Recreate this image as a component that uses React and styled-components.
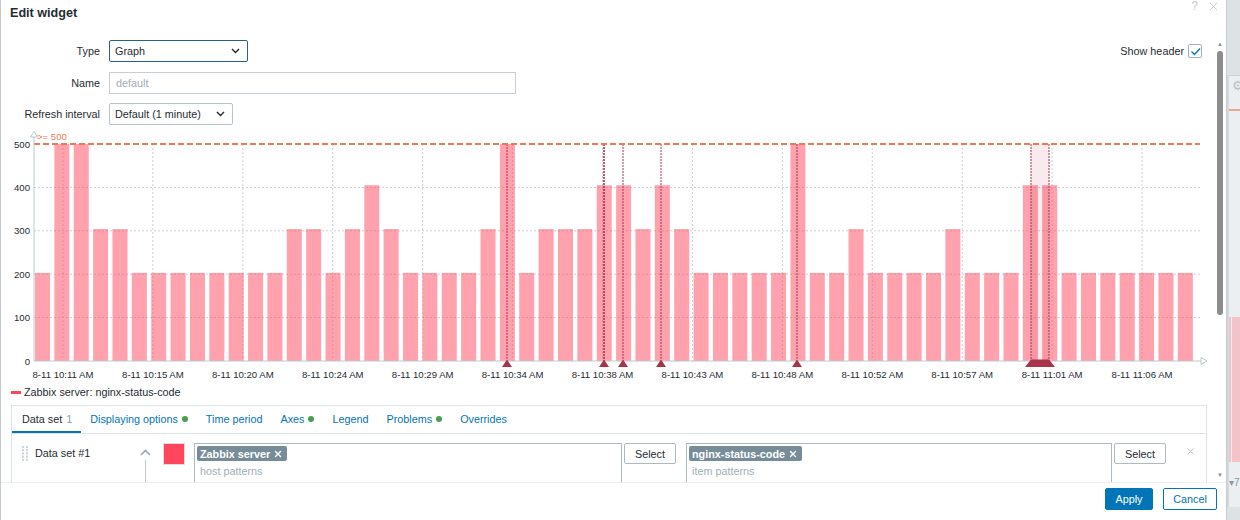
import React from 'react';
import styled, { createGlobalStyle } from 'styled-components';
import { X } from 'lucide-react';

const GlobalStyle = createGlobalStyle`
  html, body {
    margin: 0;
    padding: 0;
    background: #dfe3e6;
  }
  body {
    font-family: "Liberation Sans", Arial, sans-serif;
    font-size: 10.8px;
    color: #1f2c33;
  }
  * {
    box-sizing: border-box;
  }
`;

const expand = (list) => list.flatMap((v) => (Array.isArray(v) ? Array(v[1]).fill(v[0]) : [v]));

const rawValues = expand([
  200, 500, 500, 300, 300, [200, 8], 300, 300, 200, 300, 400, 300, [200, 4],
  300, 500, 200, 300, 300, 300, 400, 400, 300, 400, 300, [200, 5],
  500, 200, 200, 300, [200, 4], 300, [200, 3], 400, 400, [200, 7],
]);
const values = rawValues.map((v) => (v === 200 ? 203 : v === 300 ? 304 : v === 400 ? 405 : 520));

const timeLabels = ['10:11', '10:15', '10:20', '10:24', '10:29', '10:34', '10:38', '10:43', '10:48', '10:52', '10:57', '11:01', '11:06'];
const problemLines = [507, 604, 623, 661, 797];

const yOf = (v) => 361 - Math.min(v, 500) * 0.434;

const Graph = () => (
  <ChartSvg width="1197" height="250" viewBox="11 131 1197 250">
    {[100, 200, 300, 400].map((v) => (
      <line key={v} x1="34" x2="1200" y1={yOf(v)} y2={yOf(v)} stroke="#c9d0d4" strokeDasharray="2,2" />
    ))}
    {timeLabels.map((t, i) => (
      <line key={t} x1={63 + i * 89.92} x2={63 + i * 89.92} y1="144" y2="361" stroke="#c9d0d4" strokeDasharray="2,2" />
    ))}
    {values.map((v, i) => (
      <rect key={i} x={35 + i * 19.37} y={yOf(v)} width="15" height={361 - yOf(v)} fill="#ff465c" fillOpacity="0.5" />
    ))}

    <rect x="1031" y="144" width="18" height="217" fill="#b8344e" fillOpacity="0.1" />
    {[...problemLines, 1031, 1049].map((x) => (
      <line key={x} x1={x} x2={x} y1="144" y2="361" stroke="#a8344a" strokeWidth={x === 604 ? 1.6 : 1} strokeDasharray="2,1" />
    ))}

    <line x1="34" x2="1200" y1="144" y2="144" stroke="#ef7a5b" strokeWidth="2" strokeDasharray="6,3" />
    <text x="37" y="140" fontSize="9.6" fill="#ef7a5b">&gt;= 500</text>

    <line x1="34" x2="34" y1="136" y2="361" stroke="#bfc8cd" />
    <line x1="34" x2="1201" y1="361" y2="361" stroke="#bfc8cd" />
    <polygon points="34,131.5 30.5,137 37.5,137" fill="#fff" stroke="#bfc8cd" />
    <polygon points="1207,361 1201,357.5 1201,364.5" fill="#fff" stroke="#bfc8cd" />

    {problemLines.map((x) => (
      <polygon key={x} points={`${x - 5},367 ${x},359.5 ${x + 5},367`} fill="#a8344a" />
    ))}
    <polygon points="1025,367 1031,359.5 1049,359.5 1055,367" fill="#a8344a" />

    {[0, 100, 200, 300, 400, 500].map((v) => (
      <text key={v} x="30" y={yOf(v) + 3.5} fontSize="9.6" textAnchor="end" fill="#1f2c33">{v}</text>
    ))}
    {timeLabels.map((t, i) => (
      <text key={t} x={63 + i * 89.92} y="377.5" fontSize="9.6" textAnchor="middle" fill="#1f2c33">8-11 {t} AM</text>
    ))}
  </ChartSvg>
);

const SelectArrow = () => (
  <svg width="9" height="6" viewBox="0 0 9 6">
    <path d="M1 1l3.5 3.5L8 1" fill="none" stroke="#1f2c33" strokeWidth="1.4" />
  </svg>
);

const Grip = () => (
  <svg width="6" height="16" viewBox="0 0 6 16">
    {[0, 1, 2, 3, 4].map((r) => (
      <g key={r}>
        <rect x="0" y={r * 3.2} width="2" height="2" fill="#ccd3d8" />
        <rect x="4" y={r * 3.2} width="2" height="2" fill="#ccd3d8" />
      </g>
    ))}
  </svg>
);

const Tag = ({ children }) => (
  <TagBox>
    {children}
    <X size={10} strokeWidth={3.4} />
  </TagBox>
);

const GhostChart = () => (
  <svg width="14" height="180" viewBox="0 0 14 180">
    <rect x="3" y="0" width="11" height="145" fill="#f2c3c9" />
    <rect x="0" y="0" width="2" height="145" fill="#f2c3c9" />
    <line x1="0" x2="14" y1="4" y2="4" stroke="#cdd3d7" strokeDasharray="2,2" />
  </svg>
);

export default function App() {
  return (
    <>
      <GlobalStyle />
      <Screen>
        <Dialog>
          <Header>
            <Title>Edit widget</Title>
            <HeaderTools>
              <HelpMark>?</HelpMark>
              <X size={13} color="#c5ccd1" strokeWidth={1.6} />
            </HeaderTools>
          </Header>

          <Body>
            <Content>
              <FormTop>
                <FormGrid>
                  <Label>Type</Label>
                  <SelectBox $width={139} $focused>
                    Graph
                    <SelectArrow />
                  </SelectBox>
                  <Label>Name</Label>
                  <TextInput>default</TextInput>
                  <Label>Refresh interval</Label>
                  <SelectBox $width={124}>
                    Default (1 minute)
                    <SelectArrow />
                  </SelectBox>
                </FormGrid>
                <ShowHeader>
                  Show header
                  <CheckBox>
                    <svg width="11" height="9" viewBox="0 0 11 9">
                      <path d="M1.5 4.5l3 3L10 1.5" fill="none" stroke="#0275b8" strokeWidth="1.3" />
                    </svg>
                  </CheckBox>
                </ShowHeader>
              </FormTop>

              <Graph />

              <Legend>
                <LegendSwatch />
                Zabbix server: nginx-status-code
              </Legend>

              <TabsBox>
                <TabBar>
                  <Tab $active>
                    Data set<TabCount>1</TabCount>
                  </Tab>
                  <Tab>Displaying options<Dot /></Tab>
                  <Tab>Time period</Tab>
                  <Tab>Axes<Dot /></Tab>
                  <Tab>Legend</Tab>
                  <Tab>Problems<Dot /></Tab>
                  <Tab>Overrides</Tab>
                </TabBar>

                <DataSetRow>
                  <GripCell>
                    <Grip />
                  </GripCell>
                  <DataSetName>Data set #1</DataSetName>
                  <CollapseCell>
                    <svg width="11" height="7" viewBox="0 0 11 7">
                      <path d="M1 6l4.5-4.5L10 6" fill="none" stroke="#9aa8b1" strokeWidth="1.6" />
                    </svg>
                    <CollapseLine />
                  </CollapseCell>
                  <ColorSwatch />
                  <MultiSelect $width={428}>
                    <Tag>Zabbix server</Tag>
                    <Placeholder>host patterns</Placeholder>
                  </MultiSelect>
                  <SelectButton>Select</SelectButton>
                  <MultiSelect $width={426} $gap={10}>
                    <Tag>nginx-status-code</Tag>
                    <Placeholder>item patterns</Placeholder>
                  </MultiSelect>
                  <SelectButton>Select</SelectButton>
                  <RemoveIcon>
                    <X size={11} color="#b3bec5" strokeWidth={1.8} />
                  </RemoveIcon>
                </DataSetRow>
              </TabsBox>
            </Content>

            <ScrollBar>
              <ScrollArrow>▲</ScrollArrow>
              <ScrollThumb />
              <ScrollSpacer />
              <ScrollArrow>▼</ScrollArrow>
            </ScrollBar>
          </Body>

          <Footer>
            <PrimaryButton>Apply</PrimaryButton>
            <OutlineButton>Cancel</OutlineButton>
          </Footer>
        </Dialog>

        <Backdrop>
          <GhostWidget>
            <GhostGear>⚙</GhostGear>
            <GhostThreshold />
            <GhostChartWrap>
              <GhostChart />
            </GhostChartWrap>
            <GhostLabel>▾7 AM</GhostLabel>
          </GhostWidget>
        </Backdrop>
      </Screen>
    </>
  );
}

const Screen = styled.div`
  display: flex;
  width: 1240px;
  height: 520px;
  overflow: hidden;
`;

const Dialog = styled.div`
  width: 1227px;
  height: 520px;
  flex-shrink: 0;
  display: flex;
  flex-direction: column;
  background: #fff;
  border-left: 1px solid #c3cbd0;
  border-right: 1px solid #c3cbd0;
`;

const Header = styled.div`
  height: 38px;
  flex-shrink: 0;
  display: flex;
  justify-content: space-between;
  align-items: flex-start;
  padding: 0 6px 0 9px;
`;

const Title = styled.h4`
  margin: 5px 0 0;
  font-size: 12.6px;
  line-height: 16px;
  font-weight: bold;
  color: #1f2c33;
`;

const HeaderTools = styled.div`
  display: flex;
  align-items: center;
  gap: 9px;
  margin-top: 0;
`;

const HelpMark = styled.span`
  font-size: 12px;
  line-height: 13px;
  color: #c5ccd1;
`;

const Body = styled.div`
  flex: 1;
  min-height: 0;
  display: flex;
  overflow: hidden;
`;

const Content = styled.div`
  flex: 1;
  min-width: 0;
  padding: 2px 8px 0 10px;
  overflow: hidden;
`;

const FormTop = styled.div`
  display: flex;
  justify-content: space-between;
  align-items: flex-start;
`;

const FormGrid = styled.div`
  display: grid;
  grid-template-columns: 89px auto;
  grid-auto-rows: 22px;
  column-gap: 9px;
  row-gap: 9.5px;
  align-items: center;
  justify-items: start;
`;

const Label = styled.label`
  justify-self: end;
  font-size: 10.8px;
  color: #1f2c33;
`;

const SelectBox = styled.div`
  width: ${(p) => p.$width}px;
  height: 22px;
  display: flex;
  align-items: center;
  justify-content: space-between;
  padding: 0 7px 0 5px;
  border: 1px solid ${(p) => (p.$focused ? '#2a5f88' : '#b7c3ca')};
  border-radius: 2px;
  font-size: 10.8px;
  color: #1f2c33;
`;

const TextInput = styled.div`
  width: 407px;
  height: 22px;
  display: flex;
  align-items: center;
  padding: 0 6px;
  border: 1px solid #c5cfd5;
  font-size: 10.8px;
  color: #a2adb3;
`;

const ShowHeader = styled.div`
  display: flex;
  align-items: center;
  gap: 4px;
  margin: 4px 5px 0 0;
  font-size: 10.8px;
  color: #1f2c33;
`;

const CheckBox = styled.span`
  width: 14px;
  height: 14px;
  display: flex;
  align-items: center;
  justify-content: center;
  border: 1px solid #9fb0ba;
  border-radius: 2px;
`;

const ChartSvg = styled.svg`
  display: block;
  margin-top: 6px;
  font-family: "Liberation Sans", Arial, sans-serif;
`;

const Legend = styled.div`
  display: flex;
  align-items: center;
  gap: 3px;
  height: 14px;
  margin-top: 4px;
  font-size: 10.8px;
  color: #1f2c33;
`;

const LegendSwatch = styled.span`
  width: 10px;
  height: 3px;
  background: #ff465c;
`;

const TabsBox = styled.div`
  margin-top: 6px;
  height: 120px;
  border: 1px solid #dfe4e7;
  border-bottom: none;
`;

const TabBar = styled.div`
  display: flex;
  height: 28px;
  border-bottom: 1px solid #dfe4e7;
`;

const Tab = styled.div`
  display: flex;
  align-items: center;
  gap: 4px;
  padding: 0 9px 0 ${(p) => (p.$active ? 10 : 9)}px;
  font-size: 10.8px;
  color: ${(p) => (p.$active ? '#1f2c33' : '#0275b8')};
  border-bottom: 2px solid ${(p) => (p.$active ? '#0275b8' : 'transparent')};
`;

const TabCount = styled.span`
  color: #7f9fb6;
`;

const Dot = styled.span`
  width: 6px;
  height: 6px;
  border-radius: 50%;
  background: #46a04c;
`;

const DataSetRow = styled.div`
  display: flex;
  align-items: flex-start;
  padding: 9px 0 0 10px;
`;

const GripCell = styled.div`
  width: 13px;
  padding-top: 3px;
`;

const DataSetName = styled.div`
  width: 105px;
  line-height: 20px;
  font-size: 10.8px;
  color: #1f2c33;
`;

const CollapseCell = styled.div`
  width: 23px;
  display: flex;
  flex-direction: column;
  align-items: flex-start;
  padding-top: 6px;
  gap: 4px;
`;

const CollapseLine = styled.span`
  width: 1px;
  height: 40px;
  margin-left: 5px;
  background: #c3cbd0;
`;

const ColorSwatch = styled.span`
  width: 22px;
  height: 22px;
  margin-right: 9px;
  background: #ff465c;
  border: 1px solid #d9dee1;
`;

const MultiSelect = styled.div`
  width: ${(p) => p.$width}px;
  height: 60px;
  margin-left: ${(p) => p.$gap || 0}px;
  margin-right: 2px;
  padding: 2px;
  border: 1px solid #acbbc2;
  display: flex;
  flex-direction: column;
  align-items: flex-start;
`;

const TagBox = styled.span`
  display: inline-flex;
  align-items: center;
  gap: 3px;
  height: 15px;
  padding: 0 4px 0 3px;
  border-radius: 2px;
  background: #768d99;
  color: #fff;
  font-weight: bold;
  font-size: 10.8px;
`;

const Placeholder = styled.span`
  margin: 4px 0 0 3px;
  font-size: 10.8px;
  color: #a2adb3;
`;

const SelectButton = styled.button`
  width: 52px;
  height: 21px;
  padding: 0;
  background: #fff;
  border: 1px solid #acbbc2;
  border-radius: 2px;
  font-family: inherit;
  font-size: 10.8px;
  color: #1f2c33;
`;

const RemoveIcon = styled.span`
  margin: 3px 0 0 19px;
  display: flex;
`;

const ScrollBar = styled.div`
  width: 10px;
  display: flex;
  flex-direction: column;
  align-items: center;
  padding: 2px 0 3px;
  margin-right: 1px;
`;

const ScrollArrow = styled.span`
  font-size: 6px;
  line-height: 8px;
  color: #8d8d8d;
`;

const ScrollThumb = styled.span`
  width: 6px;
  height: 264px;
  margin-top: 3px;
  border-radius: 3px;
  background: #8c8c8c;
`;

const ScrollSpacer = styled.span`
  flex: 1;
`;

const Footer = styled.div`
  height: 38px;
  flex-shrink: 0;
  display: flex;
  justify-content: flex-end;
  align-items: flex-start;
  gap: 10px;
  padding: 5px 9px 0 0;
  border-top: 1px solid #eef1f3;
`;

const PrimaryButton = styled.button`
  width: 48px;
  height: 22px;
  padding: 0;
  background: #0275b8;
  border: 1px solid #0275b8;
  border-radius: 2px;
  color: #fff;
  font-family: inherit;
  font-size: 10.8px;
`;

const OutlineButton = styled(PrimaryButton)`
  width: 54px;
  background: #fff;
  color: #0275b8;
`;

const Backdrop = styled.div`
  flex: 1;
  background: #dde2e5;
  display: flex;
  flex-direction: column;
`;

const GhostWidget = styled.div`
  margin-top: 75px;
  height: 432px;
  background: #eceff1;
  border-top: 1px solid #ccd3d8;
  border-left: 2px solid #d2d8dc;
  display: flex;
  flex-direction: column;
  align-items: flex-start;
  overflow: hidden;
`;

const GhostGear = styled.span`
  margin: 3px 0 0 3px;
  font-size: 13px;
  line-height: 14px;
  color: #b7c0c6;
`;

const GhostThreshold = styled.span`
  width: 12px;
  margin-top: 16px;
  border-top: 2px dashed #efa690;
`;

const GhostChartWrap = styled.div`
  margin-top: 206px;
`;

const GhostLabel = styled.span`
  margin-top: -22px;
  font-size: 10px;
  color: #8c979d;
  white-space: nowrap;
`;
